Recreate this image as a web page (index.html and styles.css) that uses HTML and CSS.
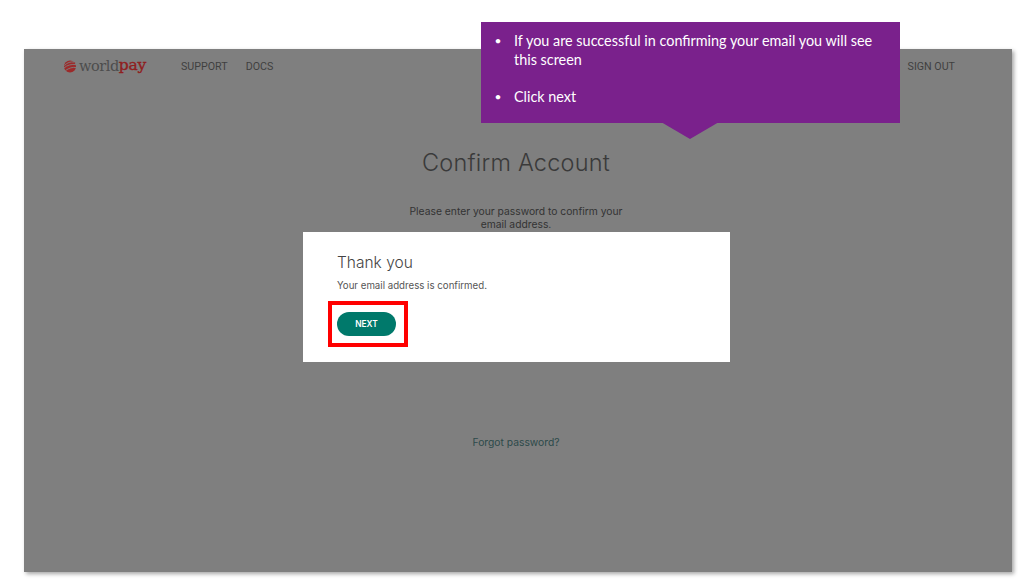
FILE: index.html
```html
<!DOCTYPE html>
<html lang="en">
<head>
<meta charset="utf-8">
<title>Confirm Account</title>
<link rel="stylesheet" href="styles.css">
</head>
<body>
<div class="slide">
  <div class="screen">
    <header class="topbar">
      <div class="brand">
        <svg class="globe" width="14" height="13" viewBox="0 0 14 13" aria-hidden="true">
          <circle cx="7" cy="6.500" r="6" fill="#9c2a2a"/>
          <path d="M1.500 5.500 C4 2.500 8 1.500 11 2 M1 8 C4 5 9 4 13 4.500 M2.500 10.500 C6 8 9.500 7 13 7.500" fill="none" stroke="#7f7f7f" stroke-width=".9"/>
        </svg>
        <span class="brand-world">world</span><span class="brand-pay">pay</span>
      </div>
      <nav class="nav">
        <span>SUPPORT</span>
        <span>DOCS</span>
      </nav>
      <span class="signout">SIGN OUT</span>
    </header>
    <main class="content">
      <h1>Confirm Account</h1>
      <p class="lead">Please enter your password to confirm your<br>email address.</p>
      <a class="forgot">Forgot password?</a>
    </main>
  </div>

  <section class="modal">
    <h2>Thank you</h2>
    <p>Your email address is confirmed.</p>
    <div class="highlight"><button class="next">NEXT</button></div>
  </section>

  <aside class="callout">
    <ul>
      <li>If you are successful in confirming your email you will see this screen</li>
      <li class="gap">Click next</li>
    </ul>
  </aside>
</div>
</body>
</html>
```
FILE: styles.css
```css
* { box-sizing: border-box; }
html, body { margin: 0; height: 100%; background: #fff; }
body { overflow: hidden; }
.slide { position: relative; width: 1018px; height: 581px; padding: 49px 6px 9px 24px; font-family: "Inter", "Liberation Sans", sans-serif; }
.screen { height: 523px; width: 988px; background: #7f7f7f; box-shadow: 2px 2px 4px rgba(0,0,0,.35); color: #3f3f3f; display: flex; flex-direction: column; }
.topbar { display: flex; align-items: center; height: 34px; padding: 0 57px 0 39px; font-size: 10.700px; font-family: "Roboto", sans-serif; }
.brand { display: flex; align-items: center; width: 118px; font-family: "DejaVu Serif", serif; font-size: 14.500px; line-height: 1; letter-spacing: -.45px; }
.globe { margin-right: 2px; flex: none; }
.brand-world { color: #4d4d4d; }
.brand-pay { color: #8f1f1f; font-weight: 400; font-size: 15.500px; letter-spacing: -.2px; -webkit-text-stroke: .4px #8f1f1f; }
.nav { display: flex; gap: 18px; }
.signout { margin-left: auto; }
.content { display: flex; flex-direction: column; align-items: center; text-align: center; padding-top: 65px; margin-left: -4px; }
h1 { margin: 0; font: 300 23.500px/30px "Inter", sans-serif; color: #3a3a3a; letter-spacing: .2px; }
.lead { margin: 27px 0 0; font-size: 10.300px; line-height: 13px; color: #333; }
.forgot { margin-top: 205px; font-size: 10.300px; line-height: 13px; color: #2d4a4a; }
.modal { position: absolute; left: 302.500px; top: 232px; width: 427.500px; height: 130px; background: #fff; padding: 21px 34.500px; color: #444; }
h2 { margin: 0; font: 300 15.500px/20px "Inter", sans-serif; color: #444; }
.modal p { margin: 5.500px 0 0; font-size: 9.700px; line-height: 13px; color: #555; }
.highlight { position: absolute; left: 25.500px; top: 69px; width: 80px; height: 46px; border: 4px solid #f00; display: flex; align-items: center; justify-content: flex-start; padding-left: 5px; }
.next { width: 59px; height: 24px; border: 0; border-radius: 12px; background: #00796b; color: #fff; font: 600 8.300px "Inter", sans-serif; padding: 0; }
.callout { position: absolute; left: 481px; top: 22px; width: 419px; height: 101px; background: #7a218c; color: #fff; font: 14.400px/18.500px "Lato", "Open Sans", sans-serif; padding: 10px 20px 0 33px; }
.callout::after { content: ""; position: absolute; left: 179px; top: 100px; width: 60px; height: 18px; background: #7a218c; clip-path: polygon(1px 0, 59px 0, 30px 17px); }
.callout ul { margin: 0; padding: 0; list-style: none; }
.callout li { position: relative; }
.callout li::before { content: "•"; position: absolute; left: -19.500px; font-size: 12px; }
.callout .gap { margin-top: 18.500px; }
```
